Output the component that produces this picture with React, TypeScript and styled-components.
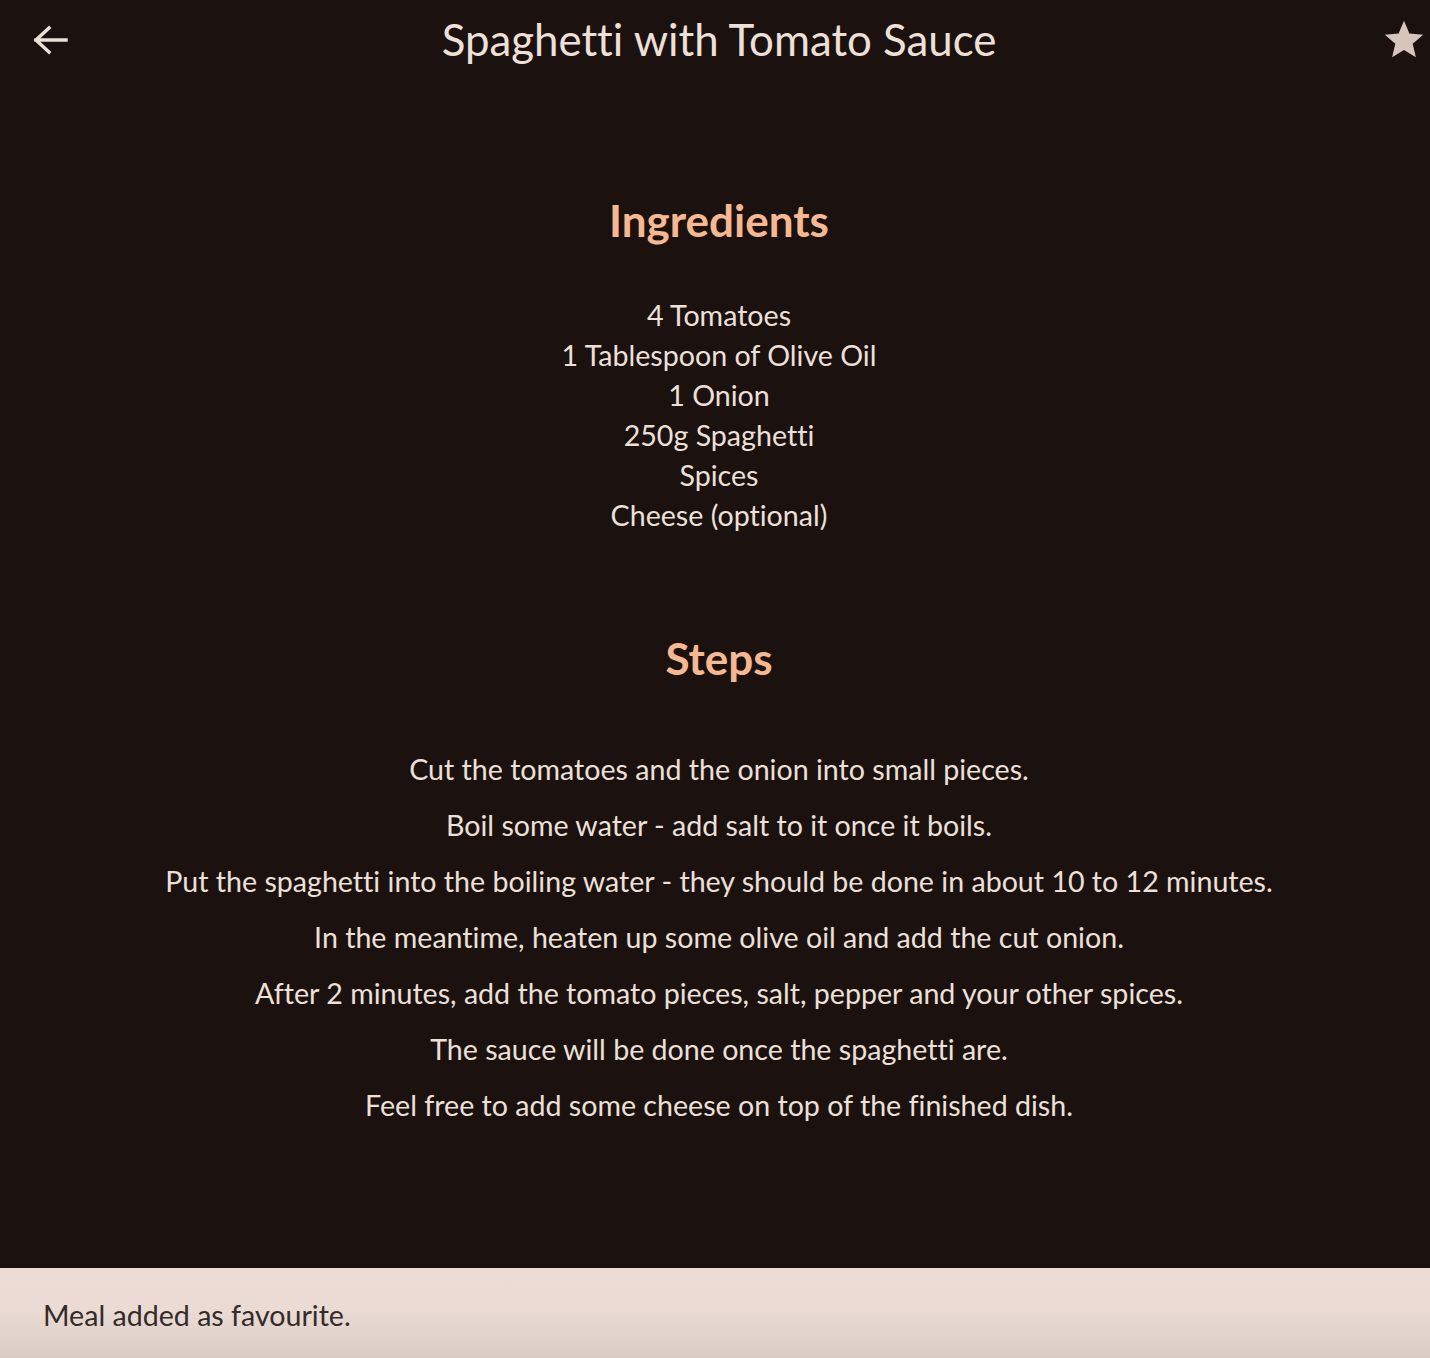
import React from 'react'
import styled, { createGlobalStyle } from 'styled-components'

const GlobalStyle = createGlobalStyle`
  html, body {
    margin: 0;
    padding: 0;
    background: #1b1210;
  }
  body {
    font-family: Lato, 'Noto Sans', sans-serif;
    font-variant-ligatures: none;
    color: #ede0d9;
  }
`

const Page = styled.div`
  min-height: 1358px;
  box-sizing: border-box;
  padding-left: 8px;
  background: #1b1210;
  display: flex;
  flex-direction: column;
`

const TopBar = styled.header`
  height: 80px;
  display: grid;
  grid-template-columns: 1fr auto 1fr;
  align-items: center;
`

const IconButton = styled.button<{ $size: number; $end?: boolean }>`
  width: ${({ $size }) => $size}px;
  height: ${({ $size }) => $size}px;
  padding: 0;
  border: none;
  background: transparent;
  display: flex;
  align-items: center;
  justify-content: center;
  justify-self: ${({ $end }) => ($end ? 'end' : 'start')};
  margin: ${({ $end }) => ($end ? '0 3px 0 0' : '0 0 0 22px')};
  cursor: pointer;
`

const Title = styled.h1`
  margin: 0;
  font-size: 43.8px;
  font-weight: 400;
  color: #ede0d9;
  position: relative;
  top: -1px;
`

const Section = styled.section<{ $top: number }>`
  display: flex;
  flex-direction: column;
  align-items: center;
  padding-top: ${({ $top }) => $top}px;
`

const SectionTitle = styled.h2<{ $below: number }>`
  margin: 0 0 ${({ $below }) => $below}px;
  font-size: 44px;
  font-weight: 700;
  color: #f5b891;
  line-height: 56px;
`

const List = styled.ul<{ $gap: number }>`
  list-style: none;
  margin: 0;
  padding: 0;
  text-align: center;
  font-size: 28.6px;
  display: flex;
  flex-direction: column;
  gap: ${({ $gap }) => $gap}px;
`

const Item = styled.li`
  line-height: 40px;
`

const Snackbar = styled.div`
  position: fixed;
  left: 0;
  right: 0;
  bottom: 0;
  height: 90px;
  display: flex;
  align-items: center;
  padding: 4px 43px 0;
  box-sizing: border-box;
  background: linear-gradient(#ecdcd5 0%, #ebdbd4 45%, #d9ccc5 100%);
  color: #332c29;
  font-size: 28.6px;
`

const ingredients = [
  '4 Tomatoes',
  '1 Tablespoon of Olive Oil',
  '1 Onion',
  '250g Spaghetti',
  'Spices',
  'Cheese (optional)',
]

const steps = [
  'Cut the tomatoes and the onion into small pieces.',
  'Boil some water - add salt to it once it boils.',
  'Put the spaghetti into the boiling water - they should be done in about 10 to 12 minutes.',
  'In the meantime, heaten up some olive oil and add the cut onion.',
  'After 2 minutes, add the tomato pieces, salt, pepper and your other spices.',
  'The sauce will be done once the spaghetti are.',
  'Feel free to add some cheese on top of the finished dish.',
]

export default function App() {
  return (
    <Page>
      <GlobalStyle />
      <TopBar>
        <IconButton $size={40} aria-label="back">
          <svg width="40" height="40" viewBox="0 0 40 40" fill="none">
            <path
              d="M36 20H6M19 8L6 20l13 12"
              stroke="#ede0d9"
              strokeWidth="3.4"
              strokeLinecap="square"
            />
          </svg>
        </IconButton>
        <Title>Spaghetti with Tomato Sauce</Title>
        <IconButton $size={46} $end aria-label="favourite">
          <svg width="46" height="46" viewBox="0 0 24 24">
            <path
              fill="#d6c4bd"
              d="M12 17.27L18.18 21l-1.64-7.03L22 9.24l-7.19-.61L12 2 9.19 8.63 2 9.24l5.46 4.73L5.82 21z"
            />
          </svg>
        </IconButton>
      </TopBar>
      <Section $top={112}>
        <SectionTitle $below={47}>Ingredients</SectionTitle>
        <List $gap={0}>
          {ingredients.map((i) => (
            <Item key={i}>{i}</Item>
          ))}
        </List>
      </Section>
      <Section $top={95}>
        <SectionTitle $below={63}>Steps</SectionTitle>
        <List $gap={16}>
          {steps.map((s) => (
            <Item key={s}>{s}</Item>
          ))}
        </List>
      </Section>
      <Snackbar>Meal added as favourite.</Snackbar>
    </Page>
  )
}
